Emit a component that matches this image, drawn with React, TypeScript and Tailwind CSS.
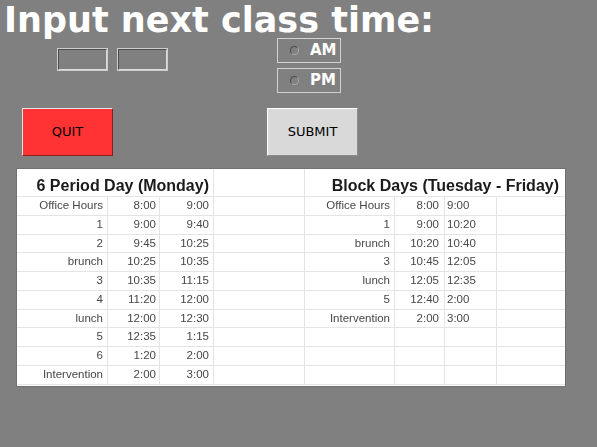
import React from 'react';

type Row = [string, string, string];

const monday: Row[] = [
  ['Office Hours', '8:00', '9:00'],
  ['1', '9:00', '9:40'],
  ['2', '9:45', '10:25'],
  ['brunch', '10:25', '10:35'],
  ['3', '10:35', '11:15'],
  ['4', '11:20', '12:00'],
  ['lunch', '12:00', '12:30'],
  ['5', '12:35', '1:15'],
  ['6', '1:20', '2:00'],
  ['Intervention', '2:00', '3:00'],
];

const block: Row[] = [
  ['Office Hours', '8:00', '9:00'],
  ['1', '9:00', '10:20'],
  ['brunch', '10:20', '10:40'],
  ['3', '10:45', '12:05'],
  ['lunch', '12:05', '12:35'],
  ['5', '12:40', '2:00'],
  ['Intervention', '2:00', '3:00'],
  ['', '', ''],
  ['', '', ''],
  ['', '', ''],
];

const cell = 'flex items-center border-b border-r border-[#e4e4e4] whitespace-nowrap';

function TimeEntry() {
  return (
    <div className="h-[23px] w-[51px] border border-[#cdcdcd]">
      <div className="h-full w-full border border-t-[#4e4e4e] border-l-[#4e4e4e] border-b-[#dcdcdc] border-r-[#dcdcdc] bg-[#808080]" />
    </div>
  );
}

function Radio({ label }: { label: string }) {
  return (
    <label className="flex h-[25px] w-[64px] items-center gap-[11px] border border-[#d2d2d2] pl-[12px]">
      <span className="size-[9px] rounded-full border border-t-[#4a4a4a] border-l-[#4a4a4a] border-b-[#a8a8a8] border-r-[#a8a8a8]" />
      <span className="text-[15px] font-bold leading-none text-white">{label}</span>
    </label>
  );
}

function Schedule() {
  return (
    <div className="ml-[17px] mt-[13px] h-[217px] w-[548px] bg-white shadow-[0_0_0_1px_#707070] font-['Liberation_Sans',Arial,sans-serif] text-[11.5px] leading-none text-[#474747]">
      <div className="grid grid-cols-[91px_52px_54px_91px_90px_50px_52px_68px] grid-rows-[28px_repeat(10,18.75px)] blur-[0.3px]">
        <div className="col-span-3 flex items-end justify-end border-b border-r border-[#e4e4e4] pb-[2px] pr-[4px] text-[16px] font-bold text-[#1a1a1a]">
          6 Period Day (Monday)
        </div>
        <div className="border-b border-r border-[#e4e4e4]" />
        <div className="col-span-4 flex items-end justify-end border-b border-[#e4e4e4] pb-[2px] pr-[6px] text-[16px] font-bold text-[#1a1a1a]">
          Block Days (Tuesday - Friday)
        </div>
        {monday.map((m, i) => {
          const b = block[i];
          return (
            <React.Fragment key={i}>
              <div className={`${cell} justify-end pr-[4px]`}>{m[0]}</div>
              <div className={`${cell} justify-end pr-[3px]`}>{m[1]}</div>
              <div className={`${cell} justify-end pr-[4px]`}>{m[2]}</div>
              <div className={cell} />
              <div className={`${cell} justify-end pr-[4px]`}>{b[0]}</div>
              <div className={`${cell} justify-end pr-[5px]`}>{b[1]}</div>
              <div className={`${cell} pl-[2px]`}>{b[2]}</div>
              <div className="border-b border-[#e4e4e4]" />
            </React.Fragment>
          );
        })}
      </div>
    </div>
  );
}

export default function App() {
  return (
    <div className="flex h-[447px] w-[597px] flex-col overflow-hidden bg-[#808080] font-['DejaVu_Sans',sans-serif]">
      <h1 className="ml-[4px] mt-[3px] h-[33px] text-[35px] font-bold leading-none text-white">
        Input next class time:
      </h1>

      <div className="flex items-start">
        <div className="ml-[57px] mt-[12px] flex gap-[9px]">
          <TimeEntry />
          <TimeEntry />
        </div>
        <div className="ml-[109px] mt-[2px] flex flex-col gap-[5px]">
          <Radio label="AM" />
          <Radio label="PM" />
        </div>
      </div>

      <div className="mt-[15px] flex">
        <button
          type="button"
          className="ml-[22px] h-[48px] w-[91px] border border-t-[#e8e8e8] border-l-[#e8e8e8] border-b-[#8a1c1c] border-r-[#8a1c1c] bg-[#ff3333] text-[13px] text-black"
        >
          QUIT
        </button>
        <button
          type="button"
          className="ml-[154px] h-[48px] w-[91px] border border-t-white border-l-white border-b-[#8c8c8c] border-r-[#8c8c8c] bg-[#d9d9d9] text-[13px] text-black"
        >
          SUBMIT
        </button>
      </div>

      <Schedule />
    </div>
  );
}
